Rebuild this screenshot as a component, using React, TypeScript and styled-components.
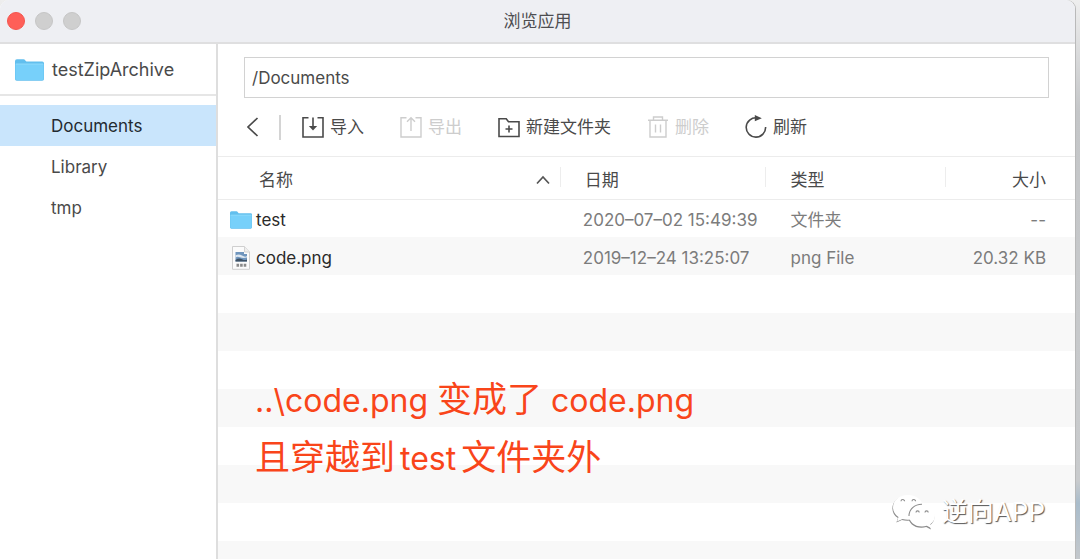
import React from "react";
import styled, { createGlobalStyle } from "styled-components";

const GlobalStyle = createGlobalStyle`
  * { box-sizing: border-box; }
  body {
    margin: 0;
    background: #f4f4f6;
    font-family: Inter, "Noto Sans CJK SC", sans-serif;
    font-size: 17px;
    line-height: 24px;
    color: #4a4a4a;
  }
  button, input { font: inherit; color: inherit; }
`;

const Desktop = styled.div`
  min-height: 100vh;
  padding-right: 5px;
  background: linear-gradient(#eeeeee, #c4c6c8 20%, #c9cbcd 86%, #a9bccb 90%, #c4c8cc);
  display: flex;
`;

const Window = styled.div`
  position: relative;
  flex: 1;
  min-width: 0;
  display: flex;
  flex-direction: column;
  background: #ffffff;
  border-radius: 9px 9px 0 0;
  box-shadow: 1px 0 0 #b9b9b9;
  overflow: hidden;
`;

const TitleBar = styled.header`
  display: grid;
  grid-template-columns: 1fr auto 1fr;
  align-items: center;
  height: 44px;
  padding: 0 7px;
  background: #eeeff3;
  border-bottom: 2px solid #dfdfe0;
`;

const Lights = styled.div`
  display: flex;
  gap: 10px;
`;

const Light = styled.button<{ $active?: boolean }>`
  width: 18px;
  height: 18px;
  padding: 0;
  border-radius: 50%;
  border: 1px solid ${(p) => (p.$active ? "#f4554e" : "#c6c6c6")};
  background: ${(p) => (p.$active ? "#fe5f58" : "#cfcfcf")};
`;

const Title = styled.h1`
  margin: 0;
  font-size: 17px;
  font-weight: 400;
  color: #4d4d50;
`;

const Body = styled.div`
  flex: 1;
  display: flex;
`;

const Sidebar = styled.nav`
  flex: 0 0 218px;
  border-right: 2px solid #dedede;
`;

const AppName = styled.div`
  display: flex;
  align-items: center;
  gap: 8px;
  height: 52px;
  padding: 2px 0 0 15px;
  border-bottom: 2px solid #e6e6e6;
  font-size: 18px;
`;

const FolderList = styled.ul`
  list-style: none;
  margin: 0;
  padding: 9px 0 0;
`;

const FolderLink = styled.a<{ $selected?: boolean }>`
  display: block;
  padding: 2px 0 0 51px;
  line-height: 39px;
  text-decoration: none;
  color: ${(p) => (p.$selected ? "#232a30" : "#4a4a4a")};
  background: ${(p) => (p.$selected ? "#c9e5fc" : "transparent")};
`;

const Main = styled.main`
  flex: 1;
  min-width: 0;
  display: flex;
  flex-direction: column;
`;

const PathField = styled.input`
  height: 41px;
  margin: 13px 26px 0;
  padding: 0 7px;
  border: 1px solid #d2d2d2;
  outline: 0;
  background: #fff;
`;

const Toolbar = styled.div`
  display: flex;
  align-items: center;
  gap: 36px;
  height: 59px;
  padding: 0 26px 0 28px;
  border-bottom: 1px solid #ececec;
`;

const BackGroup = styled.div`
  display: flex;
  align-items: center;
  gap: 20px;
  margin-right: -15px;
`;

const Divider = styled.span`
  width: 2px;
  height: 25px;
  background: #d4d4d4;
`;

const ToolButton = styled.button`
  display: flex;
  align-items: center;
  gap: 6px;
  padding: 0;
  border: 0;
  background: none;
  white-space: nowrap;
  color: #4a4a4a;
  &:disabled { color: #cdcdcd; }
`;

const Listing = styled.div`
  flex: 1;
  background: repeating-linear-gradient(#ffffff 0 38px, #f8f8f8 38px 76px) 0 42px;
`;

const Table = styled.table`
  width: 100%;
  table-layout: fixed;
  border-collapse: collapse;
`;

const HeadCell = styled.th<{ $right?: boolean; $indent?: number }>`
  height: 42px;
  padding: 4px 29px 0 ${(p) => p.$indent ?? 24}px;
  font-weight: 400;
  text-align: ${(p) => (p.$right ? "right" : "left")};
  background: linear-gradient(#ededed, #ededed) right 10px / 1px 20px no-repeat #fff;
  border-bottom: 1px solid #ececec;
  &:last-child { background: #fff; }
`;

const SortHead = styled.div`
  display: flex;
  align-items: center;
  justify-content: space-between;
  margin-right: -18px;
`;

const Cell = styled.td<{ $right?: boolean }>`
  height: 38px;
  padding: 4px 29px 0 24px;
  color: #7c7c7c;
  white-space: nowrap;
  text-align: ${(p) => (p.$right ? "right" : "left")};
`;

const FileCell = styled(Cell)`
  padding: 4px 8px 0 12px;
  color: #2a2a2a;
`;

const DateCell = styled(Cell)`
  padding-left: 22px;
`;

const FileName = styled.span`
  display: flex;
  align-items: center;
  gap: 4px;
`;

const Note = styled.p`
  position: absolute;
  left: 255px;
  top: 371px;
  margin: 0;
  font-size: 35px;
  line-height: 57px;
  color: #f9451a;
  white-space: nowrap;
`;

const Latin = styled.span<{ $spaced?: boolean }>`
  font-size: 32px;
  padding: 0 ${(p) => (p.$spaced ? 5 : 0)}px;
`;

const Watermark = styled.div`
  position: absolute;
  right: 30px;
  bottom: 28px;
  display: flex;
  align-items: center;
  gap: 6px;
  font-size: 26px;
  line-height: 38px;
  color: #ffffff;
  text-shadow: 1px 1px 1px #555555;
`;

const WechatLogo = styled.svg`
  overflow: visible;
`;

const FolderIcon = ({ width, height }: { width: number; height: number }) => (
  <svg width={width} height={height} viewBox="0 0 28 22" preserveAspectRatio="none" aria-hidden="true">
    <path d="M0 2.2Q0 .3 1.8.3H8.2Q9.3.3 10 1.4L11 2.6H26.3Q28 2.6 28 4.2V20Q28 21.8 26.3 21.8H1.7Q0 21.8 0 20Z" fill="#62bfee" />
    <path d="M.4 5H27.6V19.6Q27.6 21 26.3 21H1.7Q.4 21 .4 19.6Z" fill="#77d0fa" />
    <path d="M.8 5H27.2" stroke="#9adffc" strokeWidth=".8" />
  </svg>
);

const PngIcon = () => (
  <svg width="22" height="24" viewBox="0 0 22 24" aria-hidden="true">
    <path d="M2.5.5H14.5L19.5 6V23.3H2.5Z" fill="#fbfbfb" stroke="#cfcfcf" />
    <path d="M14.5.5V6H19.5" fill="#eee" stroke="#d4d4d4" />
    <path d="M5.5 6H14V8H17V15.5H5.5Z" fill="#6f95bd" />
    <path d="M5.5 9.2Q9 7.5 12 9.5T17 10V11.5Q13 12.5 10 11.2T5.5 11.8Z" fill="#dde7f0" />
    <path d="M5.5 14Q9 11.5 12 13.2T17 13.4V15.5H5.5Z" fill="#3d5063" />
    <path d="M6.500 19.300H16.500" fill="none" stroke="#8a8a8a" strokeWidth="3" strokeDasharray="2.600 1" />
  </svg>
);

const Stroke = ({ children }: { children: React.ReactNode }) => (
  <svg width="22" height="24" viewBox="0 0 22 24" fill="none" stroke="currentColor" strokeWidth="1.6" aria-hidden="true">
    {children}
  </svg>
);

const ImportIcon = () => (
  <Stroke>
    <path d="M6.5 2.8H1V22H21V2.8H15.5M11 2.5V14" />
    <path d="M6.8 11H15.2L11 15.4Z" fill="currentColor" stroke="none" />
  </Stroke>
);

const ExportIcon = () => (
  <Stroke>
    <path d="M6.5 2.8H1V22H21V2.8H15.5M11 4V16M7 6.8L11 2.8L15 6.8" strokeWidth="1.4" />
  </Stroke>
);

const NewFolderIcon = () => (
  <Stroke>
    <path d="M1 3.8H8.2L10.5 6.8H21V21.5H1ZM11 10.5V17.5M7.5 14H14.5" />
  </Stroke>
);

const TrashIcon = () => (
  <Stroke>
    <path d="M1 5.2H21M6.5 5V2H15.5V5M3 5.5V22H19V5.5M8.5 9.5V17.5M13.5 9.5V17.5" strokeWidth="1.4" />
  </Stroke>
);

const RefreshIcon = () => (
  <Stroke>
    <path d="M12 2.8A9.7 9.7 0 1 0 20.6 12" />
    <path d="M9.8 0L16.8 3.2L9.8 6.2Z" fill="currentColor" stroke="none" />
  </Stroke>
);

const WechatIcon = () => (
  <WechatLogo width="44" height="36" viewBox="0 0 44 36" aria-hidden="true">
    <g fill="#8b8b8b" transform="translate(-.6 .9)">
      <path d="M16 1C7 1 1 6.500 1 13.500C1 17.500 3 20.800 6.500 23L5 27.500L10.500 25Q13 25.800 16 25.800C25 25.800 31 20.300 31 13.500S25 1 16 1Z" />
      <path d="M30 10.500C22 10.500 17 15.500 17 21.500S22 32.500 30 32.500Q32.500 32.500 34.800 31.800L39.500 34.200L38.300 30.300C41.300 28.200 43 25.200 43 21.500C43 15.500 38 10.500 30 10.500Z" transform="translate(0 .4)" />
    </g>
    <path d="M16 1C7 1 1 6.500 1 13.500C1 17.500 3 20.800 6.500 23L5 27.500L10.500 25Q13 25.800 16 25.800C25 25.800 31 20.300 31 13.500S25 1 16 1Z" fill="#fff" />
    <path d="M30 10.500C22 10.500 17 15.500 17 21.500S22 32.500 30 32.500Q32.500 32.500 34.800 31.800L39.500 34.200L38.300 30.300C41.300 28.200 43 25.200 43 21.500C43 15.500 38 10.500 30 10.500Z" fill="#fff" />
    <path d="M17 22C17 15.500 22.500 10.200 30 10.300M9 7.300A1.800 1.800 0 0 1 12.600 7.300M20 7.300A1.800 1.800 0 0 1 23.600 7.300M24 18.500A1.600 1.600 0 0 1 27.200 18.500M33 18.500A1.600 1.600 0 0 1 36.200 18.500" fill="none" stroke="#8b8b8b" strokeWidth="1.1" />
  </WechatLogo>
);

const folders = ["Documents", "Library", "tmp"];

const files = [
  { name: "test", icon: <FolderIcon width={22} height={18} />, date: "2020–07–02 15:49:39", type: "文件夹", size: "--" },
  { name: "code.png", icon: <PngIcon />, date: "2019–12–24 13:25:07", type: "png File", size: "20.32 KB" },
];

export default function App() {
  return (
    <Desktop>
      <GlobalStyle />
      <Window>
        <TitleBar>
          <Lights>
            <Light $active aria-label="关闭" />
            <Light aria-label="最小化" />
            <Light aria-label="缩放" />
          </Lights>
          <Title>浏览应用</Title>
        </TitleBar>
        <Body>
          <Sidebar>
            <AppName>
              <FolderIcon width={29} height={22} />
              testZipArchive
            </AppName>
            <FolderList>
              {folders.map((name, i) => (
                <li key={name}>
                  <FolderLink href="#" $selected={i === 0}>{name}</FolderLink>
                </li>
              ))}
            </FolderList>
          </Sidebar>
          <Main>
            <PathField aria-label="路径" defaultValue="/Documents" />
            <Toolbar>
              <BackGroup>
                <ToolButton aria-label="返回">
                  <svg width="13" height="20" viewBox="0 0 13 20" fill="none" stroke="currentColor" strokeWidth="1.7">
                    <path d="M11.500 1L2 10L11.500 19" />
                  </svg>
                </ToolButton>
                <Divider />
              </BackGroup>
              <ToolButton><ImportIcon />导入</ToolButton>
              <ToolButton disabled><ExportIcon />导出</ToolButton>
              <ToolButton><NewFolderIcon />新建文件夹</ToolButton>
              <ToolButton disabled><TrashIcon />删除</ToolButton>
              <ToolButton><RefreshIcon />刷新</ToolButton>
            </Toolbar>
            <Listing>
              <Table>
                <colgroup>
                  <col style={{ width: "40%" }} />
                  <col style={{ width: "24%" }} />
                  <col style={{ width: "21%" }} />
                  <col style={{ width: "15%" }} />
                </colgroup>
                <thead>
                  <tr>
                    <HeadCell $indent={41}>
                      <SortHead>
                        名称
                        <svg width="14" height="10" viewBox="0 0 14 10" fill="none" stroke="#555" strokeWidth="1.700" aria-hidden="true">
                          <path d="M1 8.500L7 2L13 8.500" />
                        </svg>
                      </SortHead>
                    </HeadCell>
                    <HeadCell>日期</HeadCell>
                    <HeadCell>类型</HeadCell>
                    <HeadCell $right>大小</HeadCell>
                  </tr>
                </thead>
                <tbody>
                  {files.map((file) => (
                    <tr key={file.name}>
                      <FileCell><FileName>{file.icon}{file.name}</FileName></FileCell>
                      <DateCell>{file.date}</DateCell>
                      <Cell>{file.type}</Cell>
                      <Cell $right>{file.size}</Cell>
                    </tr>
                  ))}
                </tbody>
              </Table>
            </Listing>
          </Main>
        </Body>
        <Note>
          <Latin>..\code.png </Latin>变成了<Latin> code.png</Latin>
          <br />
          且穿越到<Latin $spaced>test</Latin>文件夹外
        </Note>
        <Watermark><WechatIcon />逆向APP</Watermark>
      </Window>
    </Desktop>
  );
}
